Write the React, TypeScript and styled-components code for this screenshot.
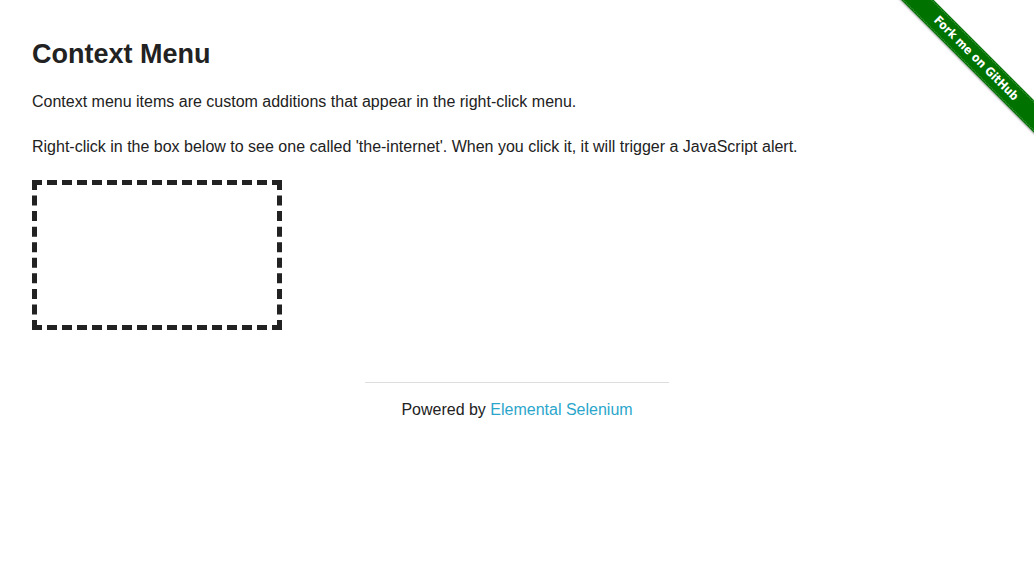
import styled, { createGlobalStyle } from "styled-components";

const GlobalStyle = createGlobalStyle`
	html, body {
		margin: 0;
		padding: 0;
		background: #fff;
	}
	body {
		font-family: "Liberation Sans", Arial, Helvetica, sans-serif;
		font-size: 16px;
		color: #222;
	}
	* {
		box-sizing: border-box;
	}
`;

const App = () => {
	return (
		<>
			<GlobalStyle />
			<Ribbon href="#">
				<Band>Fork me on GitHub</Band>
			</Ribbon>
			<Row>
				<Content>
					<Title>Context Menu</Title>
					<Text>Context menu items are custom additions that appear in the right-click menu.</Text>
					<Text>
						Right-click in the box below to see one called 'the-internet'. When you click it, it will
						trigger a JavaScript alert.
					</Text>
					<HotSpot />
				</Content>
			</Row>
			<Row>
				<Footer>
					<Rule />
					<Powered>
						Powered by <FooterLink href="#">Elemental Selenium</FooterLink>
					</Powered>
				</Footer>
			</Row>
		</>
	);
};

const Row = styled.div`
	max-width: 1000px;
	margin: 0 auto;
`;
const Content = styled.div`
	padding: 36px 15px 0;
`;
const Title = styled.h3`
	margin: 0 0 15px;
	font-size: 27px;
	line-height: 1.4;
	font-weight: bold;
	color: #222;
`;
const Text = styled.p`
	margin: 0 0 20px;
	font-size: 16px;
	line-height: 1.6;
`;
const HotSpot = styled.div`
	width: 250px;
	height: 150px;
	border: 5px dashed #222;
`;
const Footer = styled.div`
	width: 33.3333%;
	margin: 0 auto;
	padding: 0 15px;
`;
const Rule = styled.hr`
	margin: 52px 0 14px;
	border: 0;
	border-top: 1px solid #ddd;
	height: 0;
`;
const Powered = styled.div`
	text-align: center;
	font-size: 16px;
	line-height: 1.6;
`;
const FooterLink = styled.a`
	color: #2ba6cb;
	text-decoration: none;
`;
const Ribbon = styled.a`
	position: absolute;
	top: 0;
	right: 0;
	width: 149px;
	height: 149px;
	overflow: hidden;
	text-decoration: none;
`;
const Band = styled.span`
	position: absolute;
	left: -9px;
	top: 47px;
	width: 200px;
	height: 23px;
	transform: rotate(45deg);
	background: #007200;
	color: #fff;
	font-family: "DejaVu Sans", "Liberation Sans", sans-serif;
	font-stretch: condensed;
	font-weight: bold;
	font-size: 12px;
	line-height: 23px;
	text-align: center;
	box-shadow: 0 1px 2px rgba(0, 0, 0, 0.35);
	&::before,
	&::after {
		content: "";
		position: absolute;
		left: 0;
		right: 0;
		height: 0;
		border-top: 1px dotted rgba(255, 255, 255, 0.3);
	}
	&::before {
		top: 1px;
	}
	&::after {
		bottom: 1px;
	}
`;

export default App;
